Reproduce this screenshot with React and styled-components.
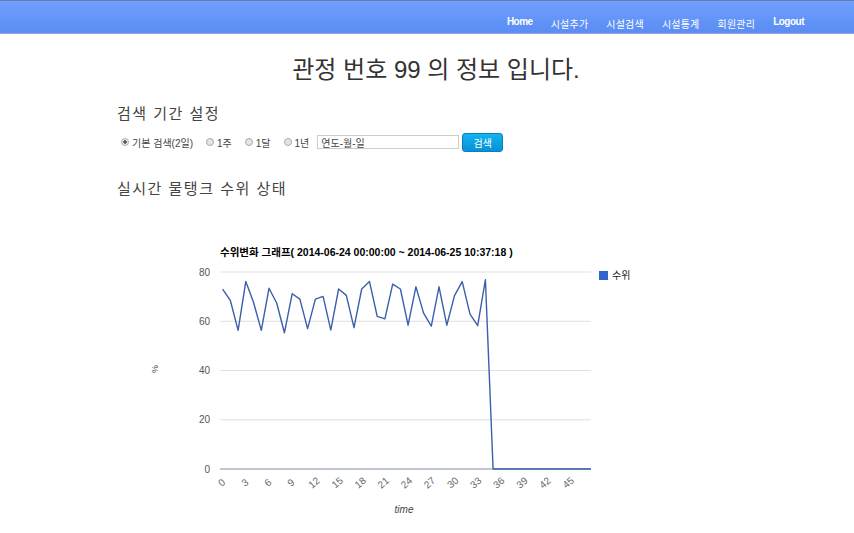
import React from 'react'
import styled, { createGlobalStyle } from 'styled-components'

const GlobalStyle = createGlobalStyle`
    body {
        margin: 0;
        background: #fff;
        font-family: "Liberation Sans", "Noto Sans CJK KR", sans-serif;
        color: #333;
    }
`

const levels = [
    73, 68.5, 56.3, 76.2, 67.7, 56.3, 73.4, 67.4, 55.3, 71.2, 69, 57, 69, 70.1, 56.4, 73.1, 70.5, 57.4,
    73.1, 76.1, 62, 61, 75.1, 73.1, 58.4, 74, 63.3, 58, 74, 58.4, 70.4, 76.1, 62.9, 58.2, 76.9,
    0, 0, 0, 0, 0, 0, 0, 0, 0, 0, 0, 0, 0, 0,
]

const menus = [
    { label: 'Home', bold: true },
    { label: '시설추가' },
    { label: '시설검색' },
    { label: '시설통계' },
    { label: '회원관리' },
    { label: 'Logout', bold: true },
]

const periods = [
    { label: '기본 검색(2일)', checked: true },
    { label: '1주' },
    { label: '1달' },
    { label: '1년' },
]

// chart geometry (svg coords)
const X0 = 80
const DATA_X0 = 82.6
const STEP = 7.7
const DATA_STEP = 7.73
const X_END = 451
const Y_TOP = 37
const Y_BASE = 234
const yOf = (v) => Y_BASE - (v / 80) * (Y_BASE - Y_TOP)

const LevelChart = () => {
    const points = levels
        .map((v, i) => `${Math.min(DATA_X0 + i * DATA_STEP, X_END).toFixed(1)},${yOf(v).toFixed(1)}`)
        .join(' ')
    const ticks = []
    for (let t = 0; t <= 45; t += 3) ticks.push(t)
    return (
        <ChartSvg width="520" height="290" viewBox="0 0 520 290">
            <text x="80" y="21" fontSize="10.5" fontWeight="bold" fill="#000">
                수위변화 그래프( 2014-06-24 00:00:00 ~ 2014-06-25 10:37:18 )
            </text>
            {[80, 60, 40, 20].map((g) => (
                <g key={g}>
                    <line x1={X0} x2={X_END} y1={yOf(g)} y2={yOf(g)} stroke="#e0e0e0" strokeWidth="1" />
                    <text x="70" y={yOf(g) + 3.5} fontSize="10" fill="#555" textAnchor="end">
                        {g}
                    </text>
                </g>
            ))}
            <text x="70" y={Y_BASE + 3.5} fontSize="10" fill="#555" textAnchor="end">
                0
            </text>
            <line x1={X0} x2={X_END} y1={Y_BASE} y2={Y_BASE} stroke="#8090a8" strokeWidth="1.2" />
            <polyline points={points} fill="none" stroke="#3b5fab" strokeWidth="1.4" strokeLinejoin="round" />
            {ticks.map((t) => (
                <text
                    key={t}
                    x={X0 + t * STEP + 2}
                    y="251"
                    fontSize="10"
                    fill="#666"
                    textAnchor="middle"
                    transform={`rotate(-40 ${X0 + t * STEP + 2} 248)`}>
                    {t}
                </text>
            ))}
            <text x="264" y="278" fontSize="10" fill="#444" fontStyle="italic" textAnchor="middle">
                time
            </text>
            <text x="18" y="134" fontSize="9" fill="#444" textAnchor="middle" transform="rotate(-90 18 134)">
                %
            </text>
            <rect x="459" y="36" width="9" height="9" fill="#3366cc" />
            <text x="472" y="44" fontSize="10" fill="#222">
                수위
            </text>
        </ChartSvg>
    )
}

const App = () => {
    return (
        <>
            <GlobalStyle />
            <NavBar>
                <NavMenu>
                    {menus.map((m) => (
                        <NavItem key={m.label} $bold={m.bold}>
                            {m.label}
                        </NavItem>
                    ))}
                </NavMenu>
            </NavBar>
            <Title>관정 번호 99 의 정보 입니다.</Title>
            <Content>
                <SectionTitle $top={19}>검색 기간 설정</SectionTitle>
                <SearchRow>
                    {periods.map((p) => (
                        <RadioLabel key={p.label}>
                            <RadioDot $checked={p.checked} />
                            {p.label}
                        </RadioLabel>
                    ))}
                    <DateInput defaultValue="연도-월-일" />
                    <SearchButton>검색</SearchButton>
                </SearchRow>
                <SectionTitle $top={27}>실시간 물탱크 수위 상태</SectionTitle>
            </Content>
            <ChartWrap>
                <LevelChart />
            </ChartWrap>
        </>
    )
}

const NavBar = styled.div`
    height: 34px;
    box-sizing: border-box;
    padding-top: 12px;
    background: linear-gradient(#6fa0ff, #5a8cf2);
    border-top: 1px solid #6b7ba8;
    border-bottom: 1px solid #9aa4dc;
    display: flex;
    justify-content: flex-end;
    align-items: center;
`

const NavMenu = styled.div`
    display: flex;
    gap: 18px;
    padding-right: 50px;
`

const NavItem = styled.span`
    color: #fff;
    font-size: 10px;
    font-weight: ${(p) => (p.$bold ? 'bold' : 'normal')};
    letter-spacing: ${(p) => (p.$bold ? '-0.5px' : '0.2px')};
`

const Title = styled.h1`
    margin: 21px 0 0;
    padding-left: 18px;
    text-align: center;
    font-size: 24px;
    font-weight: normal;
    color: #333;
    line-height: 30px;
`

const Content = styled.div`
    padding-left: 117px;
`

const SectionTitle = styled.h2`
    margin: ${(p) => p.$top}px 0 0;
    font-size: 15px;
    font-weight: normal;
    letter-spacing: 1.5px;
    color: #444;
    line-height: 20px;
`

const SearchRow = styled.div`
    display: flex;
    align-items: center;
    margin-top: 8px;
    padding-left: 4px;
    height: 20px;
`

const RadioLabel = styled.label`
    display: flex;
    align-items: center;
    gap: 3px;
    font-size: 10px;
    color: #444;
    margin-right: 13px;
`

const RadioDot = styled.span`
    width: 6px;
    height: 6px;
    border-radius: 50%;
    border: 1px solid #aaa;
    background: ${(p) => (p.$checked ? 'radial-gradient(#555 35%, #eee 45%)' : '#e4e4e4')};
`

const DateInput = styled.input`
    width: 134px;
    height: 12px;
    margin-left: -5px;
    padding: 0 3px;
    border: 1px solid #ccc;
    font-size: 10px;
    color: #444;
    font-family: "Liberation Sans", "Noto Sans CJK KR", sans-serif;
`

const SearchButton = styled.button`
    margin-left: 3px;
    width: 41px;
    height: 19px;
    border: 1px solid #0a7fbf;
    border-radius: 3px;
    background: linear-gradient(#13b2f0, #0892d6);
    color: #fff;
    font-size: 10px;
    padding: 0;
    font-family: "Liberation Sans", "Noto Sans CJK KR", sans-serif;
`

const ChartWrap = styled.div`
    margin-top: 36px;
    padding-left: 140px;
`

const ChartSvg = styled.svg`
    display: block;
    font-family: "Liberation Sans", "Noto Sans CJK KR", sans-serif;
`

export default App
